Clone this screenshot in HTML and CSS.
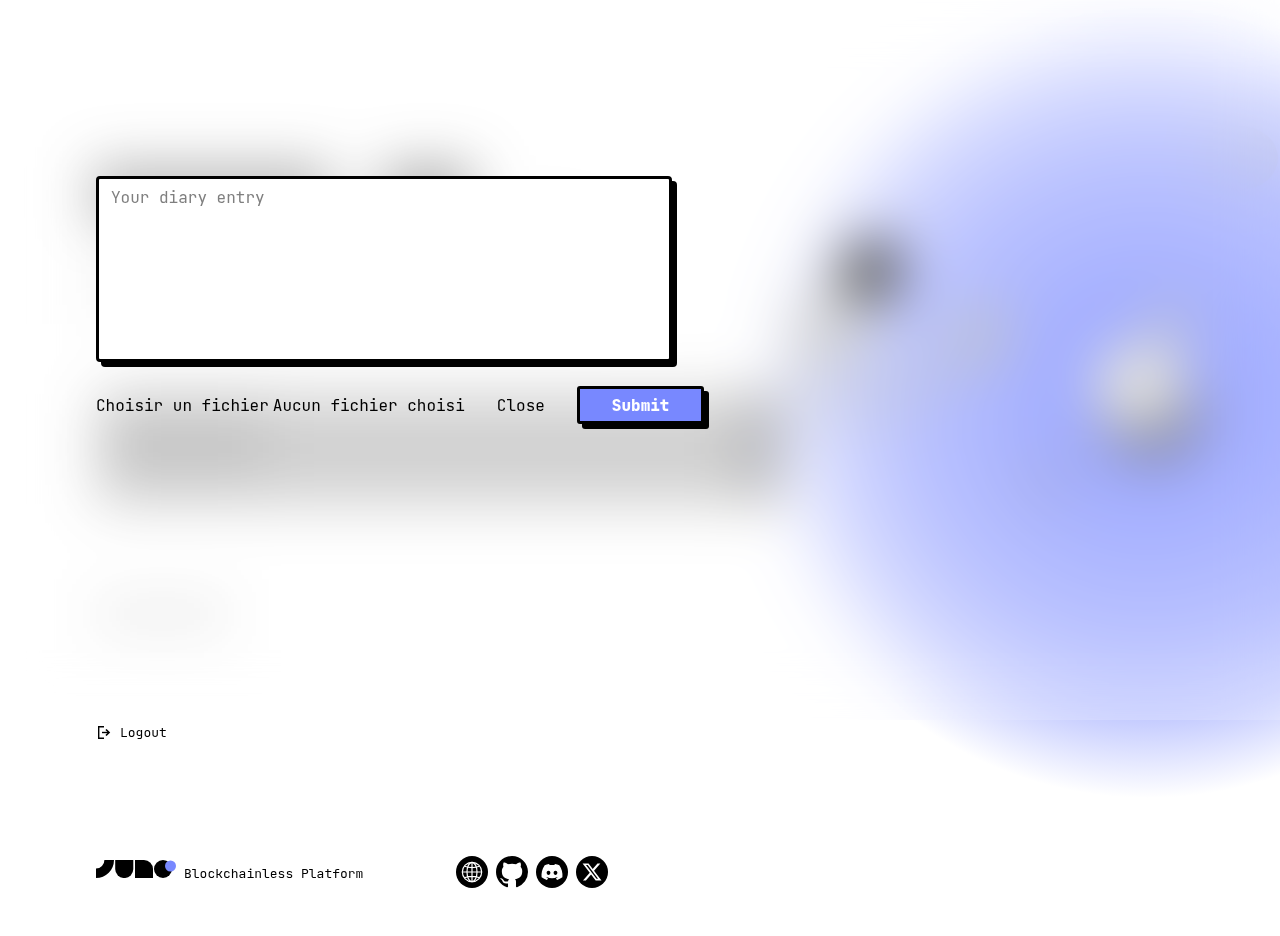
FILE: index.html
```html
<!DOCTYPE html>
<html lang="en">
<head>
<meta charset="utf-8">
<meta name="viewport" content="width=device-width, initial-scale=1">
<title>Diary</title>
<link rel="stylesheet" href="styles.css">
</head>
<body>
<div class="scene" aria-hidden="true">
  <svg class="scene-left" width="800" height="720" viewBox="0 0 800 720">
    <rect x="92" y="166" width="240" height="54" opacity=".38"/>
    <rect x="382" y="166" width="90" height="54" opacity=".44"/>
    <rect x="96" y="214" width="500" height="110" opacity=".06"/>
    <rect x="98" y="394" width="684" height="110" opacity=".24"/>
    <rect x="106" y="400" width="160" height="80" opacity=".07"/>
    <rect x="740" y="392" width="42" height="104" opacity=".18"/>
    <rect x="96" y="596" width="132" height="36" opacity=".09"/>
  </svg>
  <svg class="scene-right" width="540" height="820" viewBox="740 0 540 820">
    <defs>
      <radialGradient id="planet" gradientUnits="userSpaceOnUse" cx="1148" cy="402" r="396">
        <stop offset="0" stop-color="#7888ff"/>
        <stop offset=".3" stop-color="#7888ff" stop-opacity=".87"/>
        <stop offset=".6" stop-color="#7888ff" stop-opacity=".68"/>
        <stop offset=".8" stop-color="#7888ff" stop-opacity=".43"/>
        <stop offset="1" stop-color="#7888ff" stop-opacity="0"/>
      </radialGradient>
    </defs>
    <circle cx="1148" cy="402" r="396" fill="url(#planet)"/>
    <path d="M784 330L832 262L890 300L866 350L796 380Z" fill="#c4c4c0" opacity=".8"/>
    <path d="M780 400L840 340L900 350L1010 290L1010 365L890 430L790 430Z" fill="#b2b4b4" opacity=".26"/>
    <circle cx="980" cy="334" r="32" fill="#b0b2a8" opacity=".45"/>
    <ellipse cx="872" cy="271" rx="31" ry="33" fill="#1c1c1a"/>
    <ellipse cx="1240" cy="158" rx="38" ry="32" fill="#a8adb4" opacity=".22"/>
    <ellipse cx="1048" cy="478" rx="36" ry="28" fill="#8889a0" opacity=".2"/>
    <ellipse cx="1170" cy="330" rx="26" ry="30" fill="#b9baac" opacity=".5"/>
    <ellipse cx="1152" cy="414" rx="51" ry="48" fill="#4c4d58" opacity=".8"/>
    <ellipse cx="1140" cy="386" rx="46" ry="43" fill="#d8d8d4"/>
  </svg>
</div>
<div class="veil" aria-hidden="true"></div>

<div class="page">
  <main class="content">
    <form class="entry">
      <textarea class="entry-text" placeholder="Your diary entry" aria-label="Your diary entry"></textarea>
      <div class="entry-actions">
        <label class="file">
          <input class="file-input" type="file">
          <span>Choisir un fichier</span>
          <span>Aucun fichier choisi</span>
        </label>
        <button class="plain" type="button">Close</button>
        <button class="submit" type="submit">Submit</button>
      </div>
    </form>
    <button class="logout" type="button">
      <svg width="16" height="16" viewBox="0 0 16 16" fill="none" stroke="currentColor" stroke-width="1.4">
        <path d="M8 1.700H2.700V13.300H8"/>
        <path d="M6 7.500H13"/>
        <path d="M10 4.500L13 7.500L10 10.500" stroke-width="1.700"/>
      </svg>
      <span>Logout</span>
    </button>
  </main>

  <footer class="footer">
    <a class="brand" href="#">
      <svg width="80" height="18" viewBox="0 0 80 18" role="img" aria-label="Juno">
        <path d="M8.400 0H18A18 18 0 0 1 0 18V8.600A8.500 8.500 0 0 0 8.400 0Z"/>
        <path d="M19.200 0H37.300V9A9 9 0 0 1 19.200 9Z"/>
        <path d="M39 0H48A9 9 0 0 1 57 9V18H39Z"/>
        <circle cx="67" cy="9" r="9"/>
        <circle cx="74.500" cy="6" r="5.500" fill="#7888ff"/>
      </svg>
      <span>Blockchainless Platform</span>
    </a>
    <nav class="social" aria-label="Social links">
      <a href="#" aria-label="Website">
        <svg width="32" height="32" viewBox="0 0 32 32">
          <circle cx="16" cy="16" r="16"/>
          <g fill="none" stroke="#fff" stroke-width="1.200">
            <circle cx="16" cy="16" r="9.700"/>
            <ellipse cx="16" cy="16" rx="5" ry="9.700"/>
            <path d="M16 6.300V25.700M6.300 16H25.700M8.500 10.300Q16 13 23.500 10.300M8.500 21.700Q16 19 23.500 21.700"/>
          </g>
        </svg>
      </a>
      <a href="#" aria-label="GitHub">
        <svg width="32" height="32" viewBox="0 0 16 16"><path d="M8 0C3.580 0 0 3.580 0 8c0 3.540 2.290 6.530 5.470 7.590.4.070.55-.17.55-.38 0-.19-.01-.82-.01-1.490-2.010.37-2.530-.49-2.690-.94-.09-.23-.48-.94-.82-1.130-.28-.15-.68-.52-.01-.53.63-.01 1.080.58 1.230.82.72 1.210 1.870.87 2.330.66.07-.52.28-.87.51-1.070-1.780-.2-3.640-.89-3.640-3.950 0-.87.31-1.590.82-2.150-.08-.2-.36-1.020.08-2.120 0 0 .67-.21 2.200.82.64-.18 1.320-.27 2-.27s1.360.09 2 .27c1.530-1.040 2.200-.82 2.200-.82.44 1.100.16 1.920.08 2.120.51.56.82 1.270.82 2.150 0 3.070-1.870 3.750-3.650 3.950.29.25.54.73.54 1.480 0 1.070-.01 1.930-.01 2.200 0 .21.15.46.55.38A8.010 8.010 0 0 0 16 8c0-4.420-3.580-8-8-8z"/></svg>
      </a>
      <a href="#" aria-label="Discord">
        <svg width="32" height="32" viewBox="0 0 32 32">
          <circle cx="16" cy="16" r="16"/>
          <path transform="translate(5.500 5.500) scale(.875)" fill="#fff" d="M20.317 4.370a19.791 19.791 0 0 0-4.885-1.515.074.074 0 0 0-.079.037c-.21.375-.444.864-.608 1.250a18.270 18.270 0 0 0-5.487 0 12.640 12.640 0 0 0-.617-1.250.077.077 0 0 0-.079-.037A19.736 19.736 0 0 0 3.677 4.370a.07.07 0 0 0-.032.027C.533 9.046-.32 13.580.099 18.057a.082.082 0 0 0 .031.057 19.900 19.900 0 0 0 5.993 3.030.078.078 0 0 0 .084-.028 14.090 14.090 0 0 0 1.226-1.994.076.076 0 0 0-.041-.106 13.107 13.107 0 0 1-1.872-.892.077.077 0 0 1-.008-.128 10.200 10.200 0 0 0 .372-.292.074.074 0 0 1 .077-.010c3.928 1.793 8.180 1.793 12.062 0a.074.074 0 0 1 .078.010c.12.098.246.198.373.292a.077.077 0 0 1-.006.127 12.299 12.299 0 0 1-1.873.892.077.077 0 0 0-.041.107c.36.698.772 1.362 1.225 1.993a.076.076 0 0 0 .084.028 19.839 19.839 0 0 0 6.002-3.030.077.077 0 0 0 .032-.054c.5-5.177-.838-9.674-3.549-13.660a.061.061 0 0 0-.031-.030zM8.020 15.330c-1.183 0-2.157-1.085-2.157-2.419 0-1.333.956-2.419 2.157-2.419 1.210 0 2.176 1.096 2.157 2.420 0 1.333-.956 2.418-2.157 2.418zm7.975 0c-1.183 0-2.157-1.085-2.157-2.419 0-1.333.955-2.419 2.157-2.419 1.210 0 2.176 1.096 2.157 2.420 0 1.333-.946 2.418-2.157 2.418z"/>
        </svg>
      </a>
      <a href="#" aria-label="X">
        <svg width="32" height="32" viewBox="0 0 32 32">
          <circle cx="16" cy="16" r="16"/>
          <path transform="translate(5.500 5.500) scale(.875)" fill="#fff" d="M18.244 2.250h3.308l-7.227 8.260 8.502 11.240H16.170l-5.214-6.817L4.990 21.750H1.680l7.730-8.835L1.254 2.250H8.080l4.713 6.231zm-1.161 17.520h1.833L7.084 4.126H5.117z"/>
        </svg>
      </a>
    </nav>
  </footer>
</div>
</body>
</html>
```
FILE: styles.css
```css
* {
  box-sizing: border-box;
}

body {
  margin: 0;
  background: #fff;
  color: #000;
  font-family: "JetBrains Mono", "DejaVu Sans Mono", monospace;
  font-size: 16px;
  line-height: 24px;
}

button {
  padding: 0;
  border: 0;
  background: none;
  color: inherit;
  font: inherit;
  cursor: pointer;
}

a {
  color: inherit;
  text-decoration: none;
}

svg {
  display: block;
  flex: none;
}

/* Landing artwork, softened by the veil while the entry form is open */
.scene {
  position: absolute;
  inset: 0;
  min-height: 820px;
  overflow: hidden;
}

.scene-left,
.scene-right {
  position: absolute;
  top: 0;
}

.scene-left {
  left: 0;
}

.scene-right {
  right: 0;
}

.veil {
  position: absolute;
  top: 0;
  left: 0;
  width: 100%;
  height: 720px;
  background: rgba(255, 255, 255, 0.25);
  backdrop-filter: blur(28px);
}

.page {
  position: relative;
  display: flex;
  flex-direction: column;
  min-height: 100vh;
  padding: 176px 96px 48px;
}

.content {
  display: flex;
  flex-direction: column;
  align-items: flex-start;
  gap: 297px;
}

.entry {
  display: flex;
  flex-direction: column;
  gap: 24px;
  width: 100%;
}

.entry-text {
  display: block;
  width: 45vw;
  height: 186px;
  padding: 8px 12px;
  border: 3px solid #000;
  border-radius: 4px;
  background: #fff;
  box-shadow: 5px 5px 0 #000;
  font: inherit;
  line-height: 22px;
  resize: none;
}

.entry-text::placeholder {
  color: #7f7f7f;
}

.entry-actions {
  display: flex;
  align-items: baseline;
  gap: 32px;
}

.file {
  display: flex;
  gap: 4px;
  cursor: pointer;
}

.file-input {
  position: absolute;
  width: 1px;
  height: 1px;
  opacity: 0;
}

.submit {
  padding: 5px 32px 3px;
  border: 3px solid #000;
  border-radius: 3px;
  background: #7888ff;
  box-shadow: 5px 5px 0 #000;
  color: #fff;
  font-weight: 800;
}

.logout {
  display: flex;
  align-items: center;
  gap: 8px;
  font-size: 13px;
}

.footer {
  display: flex;
  align-items: center;
  margin-top: auto;
}

.brand {
  display: flex;
  flex: 0 0 360px;
  align-items: baseline;
  gap: 8px;
  padding-top: 2px;
  font-size: 13px;
}

.social {
  display: flex;
  gap: 8px;
}
```
